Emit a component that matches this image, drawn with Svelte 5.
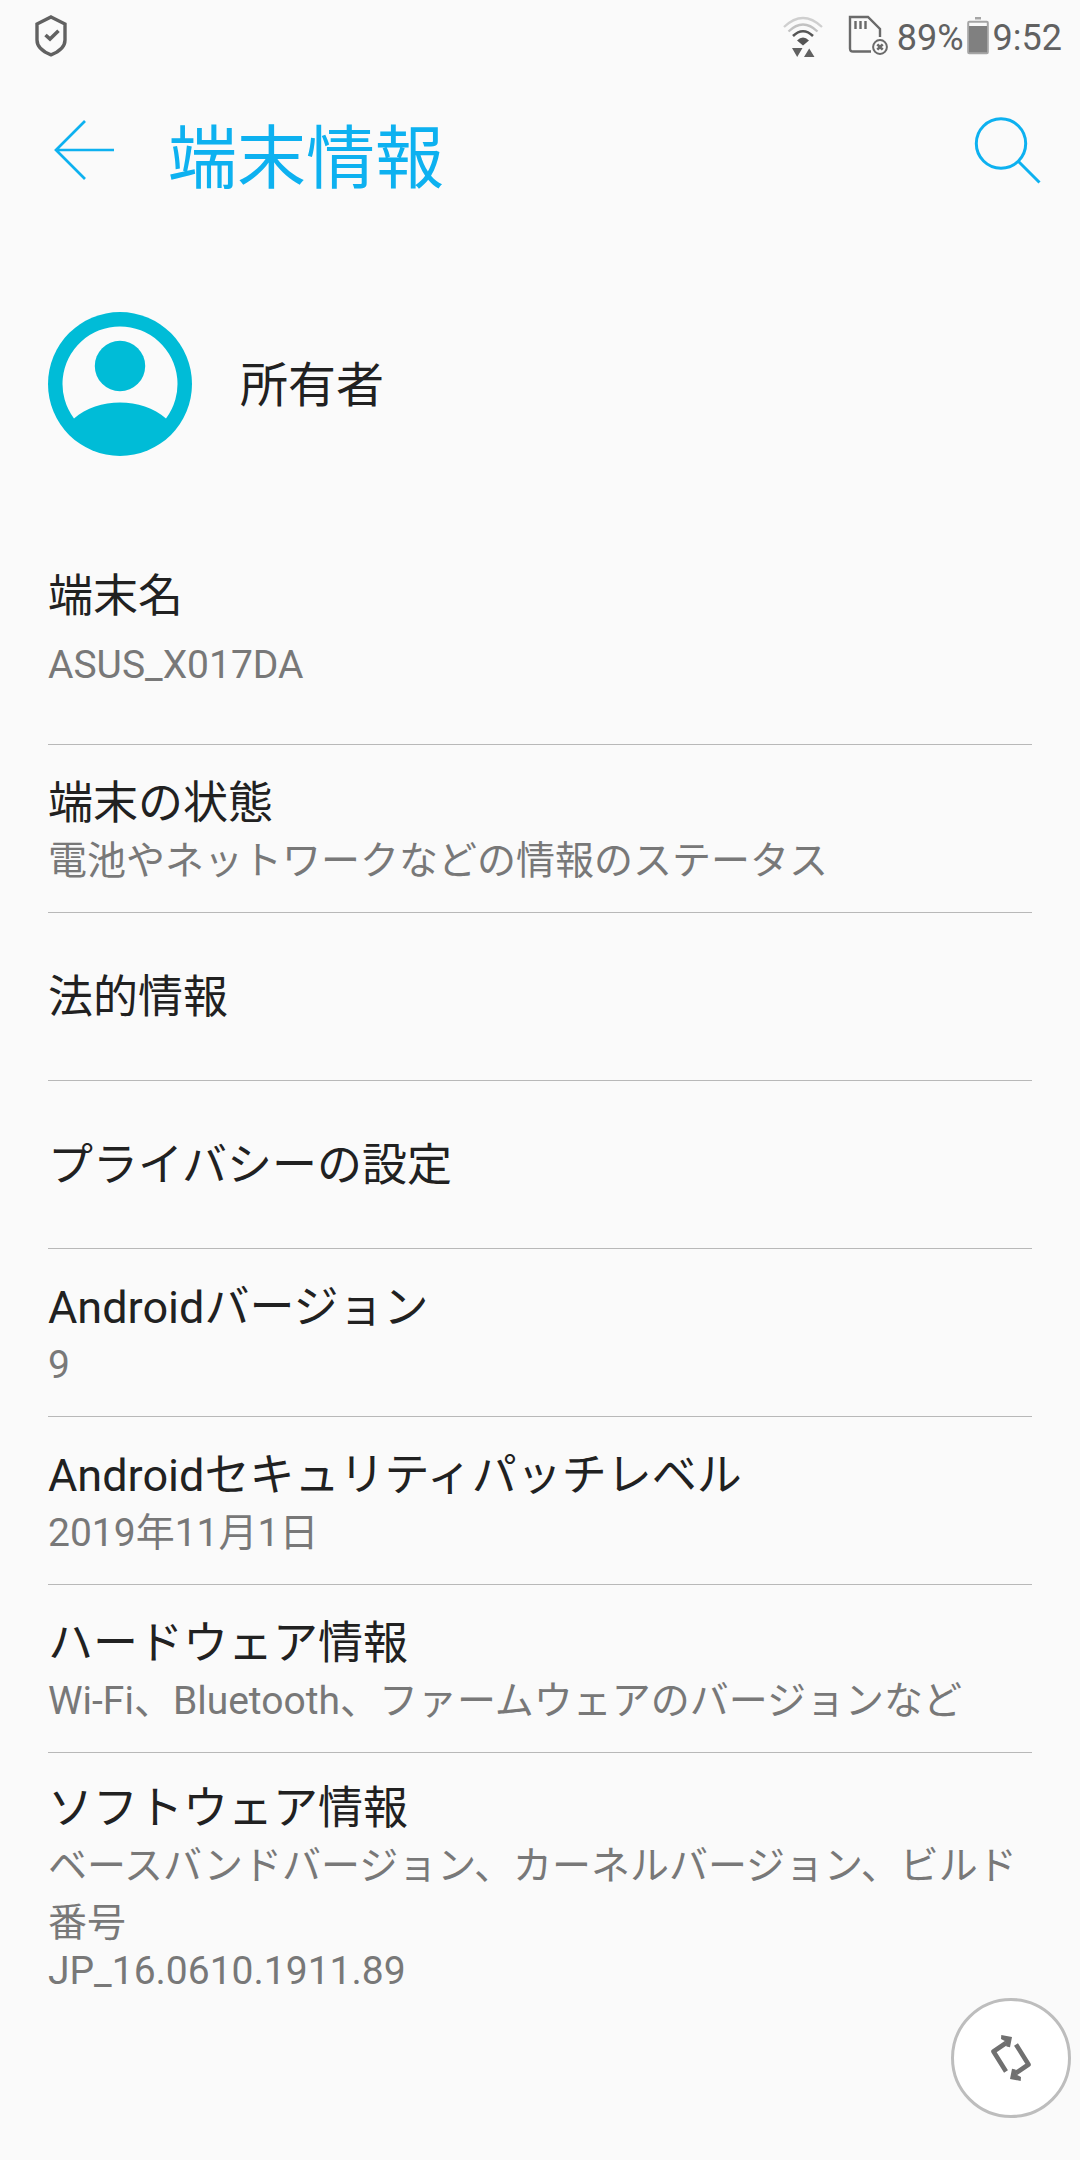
<script>
  const rows = [
    { title: '端末の状態', lines: ['電池やネットワークなどの情報のステータス'] },
    { title: '法的情報', lines: [] },
    { title: 'プライバシーの設定', lines: [] },
    { title: 'Androidバージョン', lines: ['9'] },
    { title: 'Androidセキュリティパッチレベル', lines: ['2019年11月1日'] },
    { title: 'ハードウェア情報', lines: ['Wi-Fi、Bluetooth、ファームウェアのバージョンなど'] },
  ];
</script>

<div class="screen">
  <div class="status">
    <svg class="shield" width="34" height="44" viewBox="0 0 34 44" fill="none" stroke="#616161" stroke-width="3.4">
      <path d="M17 3 L31 10 V26 C31 34 23 38.500 17 40.800 C11 38.500 3 34 3 26 V10 Z" />
      <path d="M11.500 21 L16 25 L24.500 16.800" stroke-width="3.6" />
    </svg>
    <div class="spacer"></div>
    <svg class="wifi" width="40" height="42" viewBox="0 0 40 42" fill="none" stroke-width="2.3">
      <path d="M1 11 Q20 -7 39 11" stroke="#cfcfcf" />
      <path d="M5.500 15.500 Q20 1.500 34.500 15.500" stroke="#c2c2c2" />
      <path d="M10 20 Q20 10.500 30 20" stroke="#555" stroke-width="2.600" />
      <path d="M14 24.500 Q20 18.500 26 24.500 L20 29.500 Z" fill="#555" />
      <path d="M9 32 H19.500 L14.200 41 Z M21 41 L26.200 32.500 L31.500 41 Z" fill="#616161" />
    </svg>
    <svg class="sim" width="40" height="42" viewBox="0 0 40 42" fill="none" stroke="#6a6a6a" stroke-width="2.4">
      <path d="M23 36.500 H5 Q2 36.500 2 33.500 V2 H20 L32 14 V22" />
      <path d="M7.500 6 V14 M12.500 6 V14 M17.500 6 V14" />
      <circle cx="32" cy="32" r="6.900" stroke-width="2" />
      <path d="M29.300 29.300 L34.700 34.700 M34.700 29.300 L29.300 34.700" stroke-width="2.600" />
    </svg>
    <span class="percent">89%</span>
    <svg class="battery" width="22" height="38" viewBox="0 0 22 38">
      <rect x="8" y="0" width="6" height="2.500" fill="#a5a5a5" />
      <rect x="1.200" y="4.700" width="19.600" height="31.600" rx="1" fill="#fafafa" stroke="#a5a5a5" stroke-width="2" />
      <rect x="2" y="9" width="18" height="26.500" fill="#808080" />
    </svg>
    <span class="clock">9:52</span>
  </div>

  <header>
    <svg class="back" width="62" height="62" viewBox="0 0 62 62" fill="none" stroke="#0db1f0" stroke-width="2.700">
      <path d="M31 2 L2 31 L31 60 M2 31 H60" />
    </svg>
    <h1>端末情報</h1>
    <svg class="search" width="68" height="70" viewBox="0 0 68 70" fill="none" stroke="#0db1f0" stroke-width="3">
      <circle cx="27" cy="27.500" r="24.700" />
      <path d="M44.500 45.500 L65.500 66.500" />
    </svg>
  </header>

  <section class="owner">
    <svg width="144" height="144" viewBox="0 0 144 144">
      <circle cx="72" cy="72" r="72" fill="#00bcd7" />
      <path d="M26 106.500 A57.500 57.500 0 1 1 118 106.500 C94 85 50 85 26 106.500 Z" fill="#fafafa" />
      <circle cx="72" cy="54" r="25.200" fill="#00bcd7" />
    </svg>
    <span>所有者</span>
  </section>

  <main>
    <div class="row device">
      <div class="title">端末名</div>
      <div class="summary">ASUS_X017DA</div>
    </div>
    {#each rows as row}
      <div class="row" class:single={row.lines.length === 0}>
        <div class="title">{row.title}</div>
        {#each row.lines as line}
          <div class="summary">{line}</div>
        {/each}
      </div>
    {/each}
    <div class="row software">
      <div class="title">ソフトウェア情報</div>
      <div class="summary">ベースバンドバージョン、カーネルバージョン、ビルド番号</div>
      <div class="summary build">JP_16.0610.1911.89</div>
    </div>
  </main>

  <button class="rotate" aria-label="画面の回転">
    <svg width="42" height="48" viewBox="0 0 42 48" fill="none" stroke="#707070" stroke-width="4.600">
      <path d="M16 37.500 L3.500 17.500 L16 9 M26 10.500 L38.500 30.500 L26 39" stroke-linejoin="round" />
      <path d="M11.300 1 L22 3 L20 13.300 L16.500 12.500 L14.800 7 L11 5 Z M30.700 47 L20 45 L22 34.700 L25.500 35.500 L27.200 41 L31 43 Z" fill="#707070" stroke="none" />
    </svg>
  </button>
</div>

<style>
  :global(body) { background: #fafafa; }
  .screen {
    position: relative;
    width: 1080px;
    height: 2160px;
    box-sizing: border-box;
    overflow: hidden;
    background: #fafafa;
    font-family: Roboto, 'Noto Sans CJK JP', sans-serif;
    color: #212121;
  }
  svg { display: block; flex: none; }
  .status {
    display: flex;
    align-items: flex-start;
    height: 72px;
    padding: 0 18px 0 34px;
    box-sizing: border-box;
    color: #616161;
    font-size: 36px;
    line-height: 76px;
  }
  .spacer { flex: 1; }
  .shield { margin-top: 14px; }
  .wifi { margin-top: 16px; margin-right: 25px; }
  .sim { margin-top: 15px; margin-right: 9px; }
  .battery { margin: 17px 4px 0 3px; }
  header {
    display: flex;
    align-items: flex-start;
    height: 168px;
    padding: 0 38px 0 54px;
  }
  .back { margin-top: 47px; }
  h1 {
    flex: 1;
    margin: 0 0 0 52px;
    font-size: 69px;
    font-weight: 400;
    line-height: 175px;
    color: #0db1f0;
  }
  .search { margin-top: 44px; }
  .owner {
    display: flex;
    align-items: center;
    gap: 48px;
    padding: 72px 48px 0;
    height: 144px;
    font-size: 48px;
    line-height: 144px;
  }
  .owner span { padding-top: 3px; }
  main { padding: 48px 48px 0; }
  .row {
    display: flex;
    flex-direction: column;
    justify-content: center;
    height: 168px;
    box-sizing: border-box;
    padding-top: 5px;
    border-bottom: 1px solid #b8b8b8;
  }
  .row.single { padding-top: 2px; }
  .title { font-size: 45px; line-height: 60px; }
  .summary { font-size: 39px; line-height: 55px; color: #787878; }
  .row.device { height: 241px; justify-content: flex-start; padding-top: 63px; }
  .device .summary { margin-top: 11px; }
  .row.software { height: auto; border: 0; padding-top: 26px; }
  .software .title { line-height: 59px; }
  .software .summary { line-height: 57px; }
  .software .build { line-height: 38px; }
  .rotate {
    position: absolute;
    left: 951px;
    top: 1998px;
    width: 120px;
    height: 120px;
    padding: 0;
    display: flex;
    align-items: center;
    justify-content: center;
    border: 3px solid #bdbdbd;
    border-radius: 50%;
    background: #fff;
  }
</style>
